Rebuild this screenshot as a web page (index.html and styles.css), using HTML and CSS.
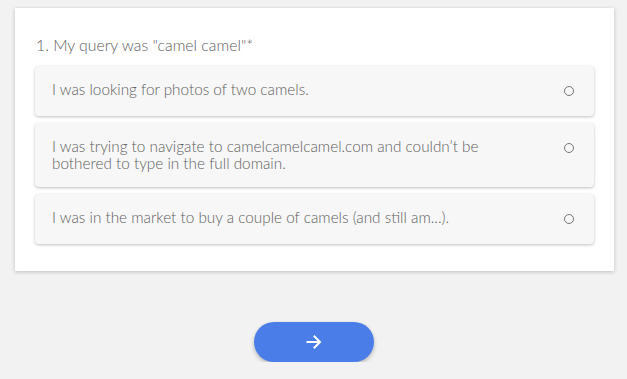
FILE: index.html
```html
<!DOCTYPE html>
<html>
<head>
<meta charset="utf-8">
<link rel="stylesheet" href="styles.css">
</head>
<body>
<div class="page">
  <div class="card">
    <div class="question">1. My query was "camel camel"*</div>
    <div class="options">
      <div class="option"><span class="label">I was looking for photos of two camels.</span><span class="radio"></span></div>
      <div class="option"><span class="label">I was trying to navigate to camelcamelcamel.com and couldn’t be bothered to type in the full domain.</span><span class="radio"></span></div>
      <div class="option"><span class="label">I was in the market to buy a couple of camels (and still am...).</span><span class="radio"></span></div>
    </div>
  </div>
  <button class="next">
    <svg width="18" height="18" viewBox="0 0 18 18" fill="none" stroke="#fff" stroke-width="2" stroke-linecap="square"><path d="M2.5 9h12M9.5 3.5L15 9l-5.5 5.5"/></svg>
  </button>
</div>
</body>
</html>
```
FILE: styles.css
```css
html, body { margin: 0; padding: 0; }
body {
  background: #f2f2f2;
  font-family: Lato, "Open Sans", sans-serif;
  font-weight: 300;
  color: #5e5e5e;
}
.page {
  display: flex;
  flex-direction: column;
  align-items: center;
  padding-top: 8px;
}
.card {
  width: 599px;
  box-sizing: border-box;
  margin-left: 2px;
  background: #fff;
  padding: 27px 20px 27px 20px;
  box-shadow: 0 1px 4px rgba(0,0,0,0.22);
}
.question {
  font-size: 15.8px;
  line-height: 19px;
  margin-bottom: 12px;
  padding-left: 1px;
}
.options {
  display: flex;
  flex-direction: column;
  gap: 7px;
}
.option {
  box-sizing: border-box;
  min-height: 50px;
  display: flex;
  align-items: flex-start;
  justify-content: space-between;
  background: #f7f7f7;
  border-radius: 4px;
  box-shadow: 0 1px 3px rgba(0,0,0,0.25);
  padding: 15px 20px 15px 17px;
  font-size: 15.3px;
  line-height: 17px;
}
.label { max-width: 445px; }
.radio {
  width: 8px;
  height: 8px;
  margin-top: 5px;
  border: 1px solid #777;
  border-radius: 50%;
  flex: none;
}
.next {
  margin-top: 51px;
  margin-left: 1px;
  width: 120px;
  height: 40px;
  border: none;
  border-radius: 20px;
  background: #4b7de9;
  box-shadow: 0 2px 4px rgba(0,0,0,0.25);
  display: flex;
  align-items: center;
  justify-content: center;
  padding: 0;
}
```
